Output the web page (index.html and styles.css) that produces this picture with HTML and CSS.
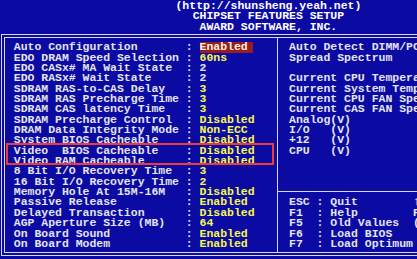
FILE: index.html
```html
<!DOCTYPE html>
<html lang="en">
<head>
  <meta charset="UTF-8">
  <meta name="viewport" content="width=device-width, initial-scale=1.0">
  <title>Chipset Features Setup</title>
  <link rel="stylesheet" href="styles.css">
</head>
<body>
  <div class="screen">
    <header class="header">
      <div>(http://shunsheng.yeah.net)</div>
      <div>CHIPSET FEATURES SETUP</div>
      <div>AWARD SOFTWARE, INC.</div>
    </header>

    <div class="frame">
      <div class="frame-inner">
        <!-- option list -->
        <div class="options">
          <div class="row"><span class="label">Auto Configuration</span><span class="colon">:</span><span class="value selected">Enabled</span></div>
          <div class="row"><span class="label">EDO DRAM Speed Selection</span><span class="colon">:</span><span class="value">60ns</span></div>
          <div class="row"><span class="label">EDO CASx# MA Wait State</span><span class="colon">:</span><span class="value plain">2</span></div>
          <div class="row"><span class="label">EDO RASx# Wait State</span><span class="colon">:</span><span class="value plain">2</span></div>
          <div class="row"><span class="label">SDRAM RAS-to-CAS Delay</span><span class="colon">:</span><span class="value">3</span></div>
          <div class="row"><span class="label">SDRAM RAS Precharge Time</span><span class="colon">:</span><span class="value">3</span></div>
          <div class="row"><span class="label">SDRAM CAS latency Time</span><span class="colon">:</span><span class="value">3</span></div>
          <div class="row"><span class="label">SDRAM Precharge Control</span><span class="colon">:</span><span class="value">Disabled</span></div>
          <div class="row"><span class="label">DRAM Data Integrity Mode</span><span class="colon">:</span><span class="value">Non-ECC</span></div>
          <div class="row"><span class="label">System BIOS Cacheable</span><span class="colon">:</span><span class="value">Disabled</span></div>
          <div class="marked">
            <div class="row"><span class="label">Video  BIOS Cacheable</span><span class="colon">:</span><span class="value">Disabled</span></div>
            <div class="row"><span class="label">Video RAM Cacheable</span><span class="colon">:</span><span class="value">Disabled</span></div>
          </div>
          <div class="row"><span class="label">8 Bit I/O Recovery Time</span><span class="colon">:</span><span class="value">3</span></div>
          <div class="row"><span class="label">16 Bit I/O Recovery Time</span><span class="colon">:</span><span class="value">2</span></div>
          <div class="row"><span class="label">Memory Hole At 15M-16M</span><span class="colon">:</span><span class="value">Disabled</span></div>
          <div class="row"><span class="label">Passive Release</span><span class="colon">:</span><span class="value">Enabled</span></div>
          <div class="row"><span class="label">Delayed Transaction</span><span class="colon">:</span><span class="value">Disabled</span></div>
          <div class="row"><span class="label">AGP Aperture Size (MB)</span><span class="colon">:</span><span class="value">64</span></div>
          <div class="row"><span class="label">On Board Sound</span><span class="colon">:</span><span class="value">Enabled</span></div>
          <div class="row"><span class="label">On Board Modem</span><span class="colon">:</span><span class="value">Enabled</span></div>
        </div>

        <!-- right hand panel -->
        <div class="side">
          <div class="info">
            <div class="line">Auto Detect DIMM/PCI Clk</div>
            <div class="line">Spread Spectrum</div>
            <div class="line">&nbsp;</div>
            <div class="line">Current CPU Temperature</div>
            <div class="line">Current System Temp.</div>
            <div class="line">Current CPU FAN Speed</div>
            <div class="line">Current CAS FAN Speed</div>
            <div class="line">Analog(V)</div>
            <div class="line">I/O   (V)</div>
            <div class="line">+12   (V)</div>
            <div class="line">CPU   (V)</div>
          </div>
          <div class="keys">
            <div class="line">ESC : Quit        &uarr;&darr;&rarr;&larr; : Select Item</div>
            <div class="line">F1  : Help        PU/PD/+/- : Modify</div>
            <div class="line">F5  : Old Values  (Shift)F2 : Color</div>
            <div class="line">F6  : Load BIOS     Defaults</div>
            <div class="line">F7  : Load Optimum  Defaults</div>
          </div>
        </div>
      </div>
    </div>
  </div>
</body>
</html>
```

FILE: styles.css
```css
/* Screen */
html,
body {
  margin: 0;
  height: 100%;
  overflow: hidden;
}

body {
  background: #0b0ba3;
  color: #e4e4ee;
  font-family: 'Liberation Mono', 'DejaVu Sans Mono', monospace;
  font-size: 11.47px;
  font-weight: bold;
  line-height: 10.35px;
}

.screen {
  width: 80ch;
  padding-top: 1px;
}

.header {
  width: 78ch;
  text-align: center;
  color: #ffffff;
}

/* Double frame */
.frame {
  margin: 2px 0 0 1px;
  padding: 2px;
  border: 1px solid #d8d8ea;
}

.frame-inner {
  display: flex;
  border: 1px solid #d8d8ea;
}

/* Options list */
.options {
  box-sizing: border-box;
  width: calc(40.3ch - 5px);
  padding: 4.3px 0 3px calc(2ch - 5px);
}

.row {
  display: flex;
  white-space: pre;
}

.label {
  width: 25ch;
}

.colon {
  width: 2ch;
}

.value {
  color: #f8f84a;
}

.value.plain {
  color: #e4e4ee;
}

.value.selected {
  padding-right: 0.8ch;
  background-color: #981c22;
  color: #fff6d6;
}

.marked {
  position: relative;
}

.marked::after {
  content: '';
  position: absolute;
  top: -2.3px;
  left: calc(6px - 2ch);
  right: 3.3px;
  bottom: 1px;
  border: 2px solid #f03a3a;
}

/* Right panel */
.side {
  flex: 1;
  display: flex;
  flex-direction: column;
  border-left: 1px solid #d8d8ea;
}

.line {
  white-space: pre;
}

.info {
  padding: 4.3px 0 0 calc(1.7ch - 1px);
}

.keys {
  margin-top: auto;
  padding: 5.55px 0 3px calc(1.7ch - 1px);
  border-top: 1px solid #d8d8ea;
}
```
